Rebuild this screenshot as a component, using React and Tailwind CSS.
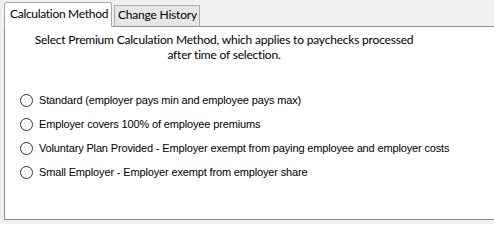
const options = [
  'Standard (employer pays min and employee pays max)',
  'Employer covers 100% of employee premiums',
  'Voluntary Plan Provided - Employer exempt from paying employee and employer costs',
  'Small Employer - Employer exempt from employer share',
];

const Radio = ({ label }) => (
  <label className="flex items-center h-[24px]">
    <span className="w-[13px] h-[13px] rounded-full border border-[#333333] bg-white flex-shrink-0" />
    <span className="ml-[6px] text-[11px] tracking-[-0.15px] text-black whitespace-nowrap" style={{ fontFamily: '"Liberation Sans", Arial, sans-serif' }}>{label}</span>
  </label>
);

export default function App() {
  return (
    <div className="w-[494px] h-[224px] bg-[#f0f0f0] pt-[2px] pl-[4px] overflow-hidden" style={{ fontFamily: 'Lato, "Noto Sans", sans-serif' }}>
      <div className="flex items-end h-[24px]">
        <div className="relative z-10 w-[108px] h-[25px] -mb-px pl-[5px] pt-[3px] bg-white border-l border-t border-r border-[#a9a9a9] rounded-t-[3px] text-[12px] leading-[16px] tracking-[-0.3px] text-black whitespace-nowrap">
          Calculation Method
        </div>
        <div className="w-[86px] h-[21px] ml-[2px] pl-[3px] pt-[1px] bg-[#e6e6e6] border-l border-t border-r border-[#acacac] text-[12px] leading-[16px] tracking-[-0.2px] text-black whitespace-nowrap">
          Change History
        </div>
      </div>
      <div className="w-[500px] h-[194px] bg-white border-l border-t border-b border-[#8e8f95]">
        <div className="w-[438px] pt-[5px] text-center text-[12px] leading-[15px] tracking-[-0.2px] text-black">
          <p>Select Premium Calculation Method, which applies to paychecks processed</p>
          <p>after time of selection.</p>
        </div>
        <div className="flex flex-col mt-[26px] pl-[15px]">
          {options.map((o) => (
            <Radio key={o} label={o} />
          ))}
        </div>
      </div>
    </div>
  );
}
